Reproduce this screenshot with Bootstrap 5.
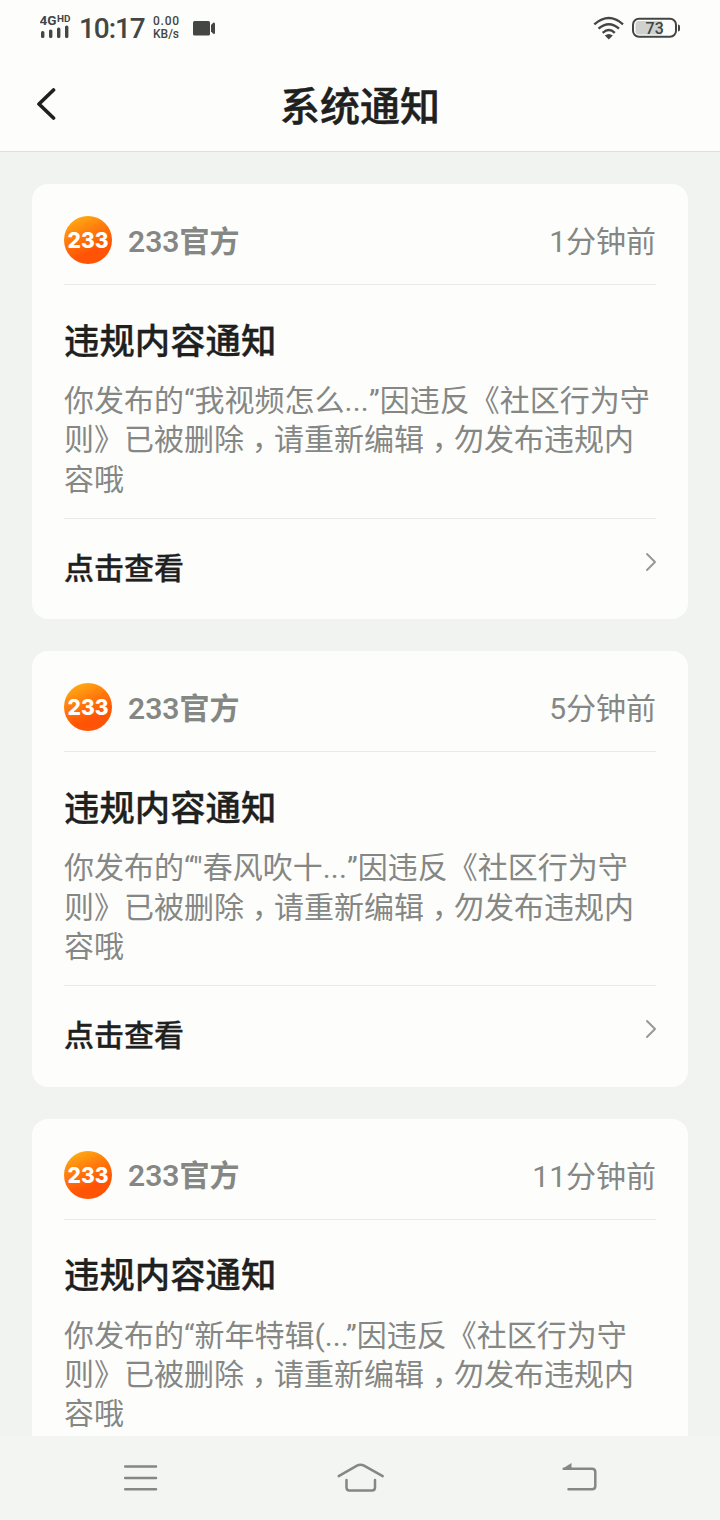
<!DOCTYPE html>
<html lang="zh-CN">
<head>
<meta charset="utf-8">
<meta name="viewport" content="width=device-width, initial-scale=1">
<title>系统通知</title>
<link href="https://cdn.jsdelivr.net/npm/bootstrap@5.3.0/dist/css/bootstrap.min.css" rel="stylesheet">
<style>
  body { font-family: Roboto, "Noto Sans CJK SC", sans-serif; background: #f1f3f1; color: #1f211f; }
  .phone { width: 720px; height: 1520px; }
  .surface { background: #fdfefc; }
  .status-bar { height: 56px; padding: 0 40px; color: #444644; }
  .net { width: 32px; }
  .clock { font-size: 28px; font-weight: 500; line-height: 32px; margin-left: 7px; padding-top: 2px; width: 67px; letter-spacing: -1.1px; }
  .speed { font-size: 12px; font-weight: 500; line-height: 13px; margin-left: 7px; width: 40px; }
  .speed span { letter-spacing: .8px; }
  .title-bar { height: 96px; border-bottom: 1px solid #dcdedc; }
  .title-bar h1 { font-size: 40px; font-weight: 500; line-height: 48px; padding-top: 8px; -webkit-text-stroke: .5px #1f211f; }
  .back { width: 100px; padding-left: 36px; }
  .feed { padding: 32px 32px 0; min-height: 0; }
  .notice { border-radius: 16px; height: 435.4px; margin-bottom: 32px; padding: 32px 32px 0; }
  .notice-head { box-sizing: content-box; height: 48px; padding-bottom: 20px; border-bottom: 1.5px solid #e9ebe9; color: #858785; font-size: 30px; line-height: 36px; }
  .notice-head strong { font-weight: 600; margin-left: 16px; padding-top: 3px; }
  .notice-head time { padding-top: 4px; }
  .notice-body { height: 234px; border-bottom: 1.5px solid #e9ebe9; padding-top: 34.5px; }
  .notice-body h2 { font-size: 35.4px; font-weight: 500; line-height: 44px; margin-bottom: 17.5px; -webkit-text-stroke: .3px #1f211f; }
  .notice-body p { font-size: 30px; line-height: 39.3px; color: #858785; white-space: nowrap; }
  .comma { font-family: "Noto Sans CJK TC", sans-serif; line-height: 0; vertical-align: -8px; }
  .dots { letter-spacing: .2px; }
  .notice-foot { font-size: 30px; font-weight: 500; line-height: 36px; padding-top: 32px; }
  .notice-foot span { -webkit-text-stroke: .3px #1f211f; }
  .notice-foot svg { margin: 1px -1px 0 0; }
  .nav-keys { height: 84px; background: #f3f5f2; }
</style>
</head>
<body>
<svg width="0" height="0" class="position-absolute">
  <defs>
    <linearGradient id="orange" x1=".1" y1="0" x2=".45" y2=".8">
      <stop offset="0" stop-color="#ffb515"/><stop offset=".55" stop-color="#ff7a0c"/><stop offset="1" stop-color="#ff5405"/>
    </linearGradient>
    <symbol id="logo" viewBox="0 0 48 48">
      <circle cx="24" cy="24" r="24" fill="url(#orange)"/>
      <text x="3.5" y="32" textLength="41" lengthAdjust="spacingAndGlyphs" font-family="Inter, sans-serif" font-weight="800" font-size="22" fill="#fff">233</text>
    </symbol>
    <symbol id="chevron" viewBox="0 0 12 20">
      <path d="M2 2 10 10 2 18" fill="none" stroke="#979997" stroke-width="2" stroke-linecap="round" stroke-linejoin="round"/>
    </symbol>
  </defs>
</svg>

<div class="phone d-flex flex-column overflow-hidden">
  <header class="surface flex-shrink-0">
    <div class="status-bar d-flex align-items-center">
      <svg class="net" width="32" height="28" viewBox="0 0 32 28" fill="#444644">
        <text x="-.5" y="10.500" font-size="13" font-weight="700" textLength="17" lengthAdjust="spacingAndGlyphs">4G</text>
        <text x="17" y="8" font-size="9" font-weight="700" textLength="13.5" lengthAdjust="spacingAndGlyphs">HD</text>
        <rect x="1" y="17" width="3.4" height="7" rx="1.5"/><rect x="9" y="15.5" width="3.4" height="8.5" rx="1.5"/>
        <rect x="17" y="13.5" width="3.4" height="10.5" rx="1.5"/><rect x="25" y="11.5" width="3.4" height="12.5" rx="1.5"/>
      </svg>
      <div class="clock text-nowrap">10:17</div>
      <div class="speed"><span>0.00</span><br>KB/s</div>
      <svg width="24" height="18" viewBox="0 0 24 18" fill="#444644">
        <rect x="0" y="2" width="17" height="14.5" rx="1.5"/><path d="M18 6 20.5 3.5Q22 3 22 5v8.5q0 2-1.5 1.5L18 12.500z"/>
      </svg>
      <svg class="ms-auto" width="32" height="26" viewBox="0 0 32 26" fill="none" stroke="#444644" stroke-width="2.4">
        <path d="M2.300 9.400Q17-3.200 31 9.400M6.500 13.700Q17 4.700 27 13.700M10.700 17.800Q17 12.300 22.800 17.800"/>
        <path d="M12.800 20.600Q16.800 17.200 20.800 20.600L16.800 24.500z" fill="#444644" stroke="none"/>
      </svg>
      <svg class="ms-2" width="48" height="22" viewBox="0 0 48 22">
        <rect x="1" y="1.800" width="43" height="18" rx="6" fill="#fdfefc" stroke="#444644" stroke-width="2"/>
        <path d="M7 4H30V17.600H7Q3.500 17.600 3.500 14V7.600Q3.500 4 7 4" fill="#cfd1cf"/>
        <path d="M46 7.500q2 0 2 2v3q0 2-2 2z" fill="#444644"/>
        <text x="22.700" y="16.500" text-anchor="middle" font-size="16" font-weight="500" fill="#444644">73</text>
      </svg>
    </div>
    <nav class="title-bar d-flex align-items-center">
      <div class="back">
        <svg width="20" height="32" viewBox="0 0 20 32"><path d="M17.500 2 3 16 17.500 30" fill="none" stroke="#1f211f" stroke-width="3.700" stroke-linecap="round" stroke-linejoin="round"/></svg>
      </div>
      <h1 class="flex-grow-1 text-center m-0">系统通知</h1>
      <div class="back"></div>
    </nav>
  </header>

  <main class="feed flex-grow-1 overflow-hidden">
    <article class="notice surface">
      <div class="notice-head d-flex align-items-center">
        <svg width="48" height="48"><use href="#logo"/></svg>
        <strong>233官方</strong><time class="ms-auto">1分钟前</time>
      </div>
      <div class="notice-body">
        <h2>违规内容通知</h2>
        <p class="m-0">你发布的“我视频怎么<span class="dots">...</span>”因违反《社区行为守<br>则》已被删除<span class="comma" lang="zh-TW">，</span>请重新编辑<span class="comma" lang="zh-TW">，</span>勿发布违规内<br>容哦</p>
      </div>
      <div class="notice-foot d-flex justify-content-between">
        <span>点击查看</span><svg width="12" height="20"><use href="#chevron"/></svg>
      </div>
    </article>
    <article class="notice surface">
      <div class="notice-head d-flex align-items-center">
        <svg width="48" height="48"><use href="#logo"/></svg>
        <strong>233官方</strong><time class="ms-auto">5分钟前</time>
      </div>
      <div class="notice-body">
        <h2>违规内容通知</h2>
        <p class="m-0">你发布的“"春风吹十<span class="dots">...</span>”因违反《社区行为守<br>则》已被删除<span class="comma" lang="zh-TW">，</span>请重新编辑<span class="comma" lang="zh-TW">，</span>勿发布违规内<br>容哦</p>
      </div>
      <div class="notice-foot d-flex justify-content-between">
        <span>点击查看</span><svg width="12" height="20"><use href="#chevron"/></svg>
      </div>
    </article>
    <article class="notice surface">
      <div class="notice-head d-flex align-items-center">
        <svg width="48" height="48"><use href="#logo"/></svg>
        <strong>233官方</strong><time class="ms-auto">11分钟前</time>
      </div>
      <div class="notice-body border-0">
        <h2>违规内容通知</h2>
        <p class="m-0">你发布的“新年特辑(...”因违反《社区行为守<br>则》已被删除<span class="comma" lang="zh-TW">，</span>请重新编辑<span class="comma" lang="zh-TW">，</span>勿发布违规内<br>容哦</p>
      </div>
    </article>
  </main>

  <footer class="nav-keys flex-shrink-0 d-flex justify-content-between align-items-center">
    <svg width="240" height="84" fill="none" stroke="#858785" stroke-width="2.500" stroke-linecap="round"><path d="M125.200 30.500H156M125.200 42H156M125.200 53.300H156"/></svg>
    <svg width="240" height="84" fill="none" stroke="#858785" stroke-width="2.500" stroke-linecap="round"><path d="M98.700 40.200 117 29.700Q120.500 27.700 124 29.700L142.700 40.200M106.500 44V51.500Q106.500 54.500 109.500 54.500H132Q135 54.500 135 51.500V44"/></svg>
    <svg width="240" height="84" fill="none" stroke="#858785" stroke-width="2.500" stroke-linecap="round"><path d="M84 32.700H112Q115.300 32.700 115.300 36V50Q115.300 53.300 112 53.300H88.500"/><path d="M82 33 91.500 27V33.500H82.500z" fill="#858785" stroke="none"/></svg>
  </footer>
</div>
<script src="https://cdn.jsdelivr.net/npm/bootstrap@5.3.0/dist/js/bootstrap.bundle.min.js"></script>
</body>
</html>
